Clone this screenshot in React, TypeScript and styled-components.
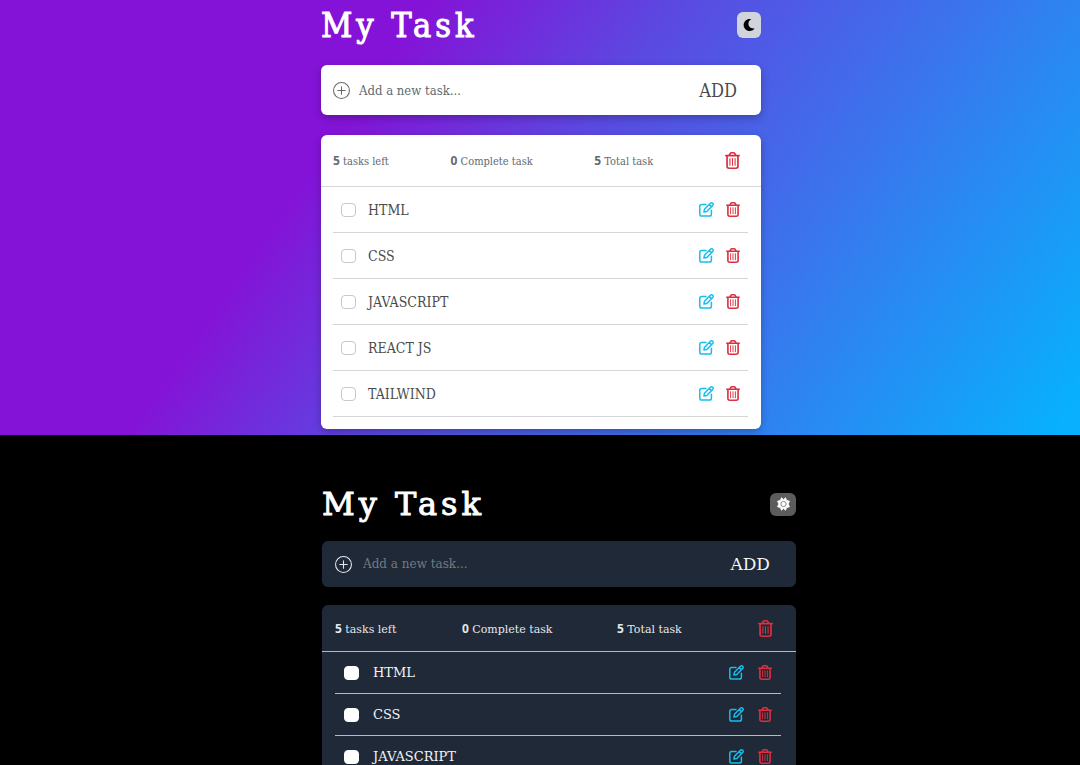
import React from 'react';
import styled, { createGlobalStyle, ThemeProvider } from 'styled-components';
import { FaMoon } from 'react-icons/fa';
import { BsPlusCircle } from 'react-icons/bs';

const light = {
  font: '"DejaVu Serif Condensed", "DejaVu Serif", serif',
  page: 'linear-gradient(125deg, #8413d7 31%, #5b49e1 49%, #3b74ed 70%, #08b0fd 98%)',
  pad: '0 0 6px',
  width: '440px',
  offset: '219px',
  titleSize: '34px',
  titleGap: '15px',
  card: '#ffffff',
  shadow: '0 3px 8px rgba(0, 0, 0, 0.25)',
  text: '#4b4b4b',
  muted: '#626970',
  placeholder: '#626970',
  line: '#d6d6d6',
  formHeight: '50px',
  gap: '20px',
  statsHeight: '52px',
  rowHeight: '46px',
  toggleBg: '#d1d5db',
  toggleFg: '#000000',
  toggleW: '24px',
  toggleH: '26px',
  box: '#c8c8c8',
  inset: '12px',
  formEnd: '24px',
  statsEnd: '21px',
  listEnd: '13px',
  rowPad: '8px',
  fieldGap: '9px',
  labelGap: '12px',
  iconGap: '12px',
  plus: '#6b6b6b',
  addSize: '18px',
  inputSize: '13px',
  statSize: '11px',
  taskSize: '14px',
  countSize: '12px',
};

const dark: typeof light = {
  ...light,
  font: '"DejaVu Serif", serif',
  page: '#000000',
  pad: '44px 0 0',
  width: '474px',
  offset: '218px',
  titleSize: '32px',
  titleGap: '12px',
  card: '#1f2937',
  shadow: 'none',
  text: '#f3f4f6',
  muted: '#e5e7eb',
  placeholder: '#737a84',
  line: '#b4bbc4',
  formHeight: '46px',
  gap: '18px',
  statsHeight: '47px',
  rowHeight: '42px',
  toggleBg: '#5c5c5c',
  toggleFg: '#ffffff',
  toggleW: '26px',
  toggleH: '23px',
  box: '#ffffff',
  inset: '13px',
  formEnd: '26px',
  statsEnd: '23px',
  listEnd: '15px',
  rowPad: '9px',
  fieldGap: '11px',
  labelGap: '14px',
  iconGap: '14px',
  plus: '#e5e7eb',
  addSize: '17px',
  inputSize: '12px',
  taskSize: '13px',
};

const Global = createGlobalStyle`
  * { box-sizing: border-box; }
  html { background: #000; }
  body { margin: 0; height: 100vh; overflow: hidden; }
  button { border: 0; padding: 0; background: none; font: inherit; color: inherit; cursor: pointer; }
  svg { display: block; }
`;

const Page = styled.section`
  padding: ${(p) => p.theme.pad};
  background: ${(p) => p.theme.page};
  font-family: ${(p) => p.theme.font};
`;

const Column = styled.main`
  width: ${(p) => p.theme.width};
  max-width: 60%;
  margin-left: calc(50% - ${(p) => p.theme.offset});
`;

const Header = styled.header`
  display: flex;
  align-items: center;
  justify-content: space-between;
  height: 50px;
  margin-bottom: ${(p) => p.theme.titleGap};
`;

const Title = styled.h1`
  margin: 0;
  color: #fff;
  font-size: ${(p) => p.theme.titleSize};
  line-height: 48px;
  font-weight: 400;
  letter-spacing: 4px;
  -webkit-text-stroke: 1px #fff;
`;

const Toggle = styled.button`
  display: grid;
  place-items: center;
  width: ${(p) => p.theme.toggleW};
  height: ${(p) => p.theme.toggleH};
  border-radius: 6px;
  background: ${(p) => p.theme.toggleBg};
  color: ${(p) => p.theme.toggleFg};
`;

const Card = styled.div`
  border-radius: 6px;
  background: ${(p) => p.theme.card};
  box-shadow: ${(p) => p.theme.shadow};
  color: ${(p) => p.theme.text};
`;

const Form = styled(Card).attrs({ as: 'form' })`
  display: flex;
  align-items: center;
  height: ${(p) => p.theme.formHeight};
  padding: 0 ${(p) => p.theme.formEnd} 0 ${(p) => p.theme.inset};
  gap: ${(p) => p.theme.fieldGap};
  margin-bottom: ${(p) => p.theme.gap};
`;

const Plus = styled(BsPlusCircle)`
  color: ${(p) => p.theme.plus};
`;

const Field = styled.input`
  flex: 1;
  min-width: 0;
  border: 0;
  padding: 0;
  outline: 0;
  background: transparent;
  color: inherit;
  font-family: inherit;
  font-size: ${(p) => p.theme.inputSize};
  &::placeholder { color: ${(p) => p.theme.placeholder}; opacity: 1; }
`;

const AddButton = styled.button`
  font-size: ${(p) => p.theme.addSize};
`;

const Stats = styled.div`
  display: grid;
  grid-template-columns: 27fr 33fr 30fr auto;
  align-items: center;
  height: ${(p) => p.theme.statsHeight};
  padding: 0 ${(p) => p.theme.statsEnd} 0 ${(p) => p.theme.inset};
  border-bottom: 1px solid ${(p) => p.theme.line};
  color: ${(p) => p.theme.muted};
  font-size: ${(p) => p.theme.statSize};
`;

const Count = styled.b`
  font-family: "Noto Sans", sans-serif;
  font-size: ${(p) => p.theme.countSize};
  font-weight: 700;
`;

const List = styled.ul`
  list-style: none;
  margin: 0;
  padding: 0 ${(p) => p.theme.listEnd} 12px ${(p) => p.theme.inset};
`;

const Row = styled.li`
  display: flex;
  align-items: center;
  gap: ${(p) => p.theme.iconGap};
  height: ${(p) => p.theme.rowHeight};
  padding: 0 ${(p) => p.theme.rowPad};
  border-bottom: 1px solid ${(p) => p.theme.line};
`;

const TaskLabel = styled.label`
  flex: 1;
  display: flex;
  align-items: center;
  gap: ${(p) => p.theme.labelGap};
  font-size: ${(p) => p.theme.taskSize};
`;

const Check = styled.input`
  appearance: none;
  width: 15px;
  height: 14px;
  margin: 0;
  border: 1px solid ${(p) => p.theme.box};
  border-radius: 4px;
  background: #fff;
`;

const IconButton = styled.button<{ $tone: string }>`
  && { color: ${(p) => p.$tone}; }
`;

const red = '#dc2f3f';
const cyan = '#18bdec';

function TrashIcon({ width, height }: { width: number; height: number }) {
  return (
    <svg width={width} height={height} viewBox="0 0 14 17" preserveAspectRatio="none" fill="none" stroke="currentColor" strokeLinecap="round" strokeLinejoin="round">
      <path d="M.8 3.6h12.4M4 3.2 5 1.3Q5.3.8 5.8.8h2.4q.5 0 .8.5l1 1.9" strokeWidth="1.6" />
      <path d="M1.9 4v10.3q0 1.9 1.9 1.9h6.4q1.9 0 1.9-1.9V4" strokeWidth="1.6" />
      <path d="M4.6 6.5v6.8M7 6.5v6.8M9.4 6.5v6.8" strokeWidth="1" />
    </svg>
  );
}

function EditIcon() {
  return (
    <svg width="15" height="15" viewBox="0 0 15 15" fill="none" stroke="currentColor" strokeWidth="1.5" strokeLinecap="round" strokeLinejoin="round">
      <path d="M7 2.6H2.6Q.8 2.6.8 4.4v7.9q0 1.8 1.8 1.8h8q1.8 0 1.8-1.8V8.2" />
      <path d="M4.9 10.1l.6-2.9 5.9-5.9q.5-.5 1.1-.5.7 0 1.2.5t.5 1.1q0 .6-.5 1.1L7.8 9.5zM10.3 2.6l2.2 2.2" />
    </svg>
  );
}

function SunIcon() {
  return (
    <svg width="15" height="14" viewBox="0 0 16 16" fill="currentColor" stroke="currentColor" strokeLinejoin="round">
      <path d="M8 3 10.3.9 11.5 3.9 14.8 4.8 13.3 8 14.8 11.2 11.5 12.1 10.3 15.1 8 13 5.7 15.1 4.5 12.1 1.2 11.2 2.7 8 1.2 4.8 4.5 3.9 5.7.9z" strokeWidth="1" />
      <circle cx="8" cy="8" r="3" fill="#ffffff" stroke="#77717c" strokeWidth="1" />
    </svg>
  );
}

type PanelProps = { name: string; theme: typeof light; tasks: string[]; icon: React.ReactNode };

function Panel({ name, theme, tasks, icon }: PanelProps) {
  return (
    <ThemeProvider theme={theme}>
      <Page>
        <Column>
          <Header>
            <Title>My Task</Title>
            <Toggle aria-label="Switch theme">{icon}</Toggle>
          </Header>
          <Form>
            <Plus size={17} />
            <Field aria-label="New task" placeholder="Add a new task..." />
            <AddButton type="button">ADD</AddButton>
          </Form>
          <Card>
            <Stats>
              <span><Count>5</Count> tasks left</span>
              <span><Count>0</Count> Complete task</span>
              <span><Count>5</Count> Total task</span>
              <IconButton $tone={red} aria-label="Delete all"><TrashIcon width={15} height={17} /></IconButton>
            </Stats>
            <List>
              {tasks.map((t) => (
                <Row key={t}>
                  <TaskLabel htmlFor={name + t}>
                    <Check type="checkbox" id={name + t} />
                    {t}
                  </TaskLabel>
                  <IconButton $tone={cyan} aria-label={'Edit ' + t}><EditIcon /></IconButton>
                  <IconButton $tone={red} aria-label={'Delete ' + t}><TrashIcon width={14} height={15} /></IconButton>
                </Row>
              ))}
            </List>
          </Card>
        </Column>
      </Page>
    </ThemeProvider>
  );
}

const tasks = ['HTML', 'CSS', 'JAVASCRIPT', 'REACT JS', 'TAILWIND'];

export default function App() {
  return (
    <>
      <Global />
      <Panel name="light-" theme={light} tasks={tasks} icon={<FaMoon size={12} />} />
      <Panel name="dark-" theme={dark} tasks={tasks} icon={<SunIcon />} />
    </>
  );
}
